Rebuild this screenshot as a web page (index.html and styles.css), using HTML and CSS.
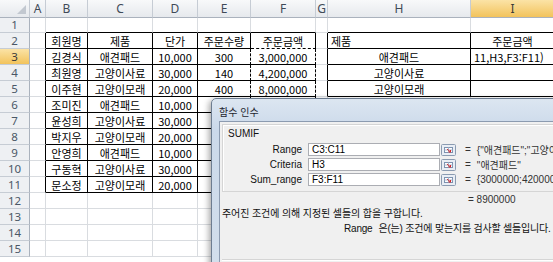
FILE: index.html
```html
<!DOCTYPE html>
<html lang="ko">
<head>
  <meta charset="UTF-8" />
  <title>SUMIF 함수 인수</title>
  <link rel="stylesheet" href="styles.css">
</head>
<body>

  <!-- Worksheet -->
  <table class="sheet">
    <colgroup>
      <col class="c-hdr"><col class="c-a"><col class="c-b"><col class="c-c"><col class="c-d">
      <col class="c-e"><col class="c-f"><col class="c-g"><col class="c-h"><col class="c-i">
    </colgroup>
    <thead>
      <tr>
        <th class="corner"></th><th>A</th><th>B</th><th>C</th><th>D</th>
        <th>E</th><th>F</th><th>G</th><th>H</th><th class="sel">I</th>
      </tr>
    </thead>
    <tbody>
      <tr class="r1">
        <th>1</th><td></td><td class="kb"></td><td class="kb"></td><td class="kb"></td>
        <td class="kb"></td><td class="kb"></td><td></td><td class="kb"></td><td class="kb"></td>
      </tr>
      <tr>
        <th>2</th><td class="kr"></td><td class="k">회원명</td><td class="k">제품</td><td class="k">단가</td>
        <td class="k">주문수량</td><td class="f2">주문금액</td><td class="kr"></td><td class="k left">제품</td><td class="k">주문금액</td>
      </tr>
      <tr>
        <th class="sel">3</th><td class="kr"></td><td class="k">김경식</td><td class="k">애견패드</td><td class="k">10,000</td>
        <td class="ed">300</td><td class="fm">3,000,000</td><td class="kr"></td><td class="k">애견패드</td><td class="k left">11,H3,F3:F11)</td>
      </tr>
      <tr>
        <th>4</th><td class="kr"></td><td class="k">최원영</td><td class="k">고양이사료</td><td class="k">30,000</td>
        <td class="ed">140</td><td class="fm">4,200,000</td><td class="kr"></td><td class="k">고양이사료</td><td class="k"></td>
      </tr>
      <tr>
        <th>5</th><td class="kr"></td><td class="k">이주현</td><td class="k">고양이모래</td><td class="k">20,000</td>
        <td class="ed">400</td><td class="fm">8,000,000</td><td class="kr"></td><td class="k">고양이모래</td><td class="k"></td>
      </tr>
      <tr>
        <th>6</th><td class="kr"></td><td class="k">조미진</td><td class="k">애견패드</td><td class="k">10,000</td>
        <td class="ed"></td><td class="fm"></td><td></td><td></td><td></td>
      </tr>
      <tr>
        <th>7</th><td class="kr"></td><td class="k">윤성희</td><td class="k">고양이사료</td><td class="k">30,000</td>
        <td class="ed"></td><td class="fm"></td><td></td><td></td><td></td>
      </tr>
      <tr>
        <th>8</th><td class="kr"></td><td class="k">박지우</td><td class="k">고양이모래</td><td class="k">20,000</td>
        <td class="ed"></td><td class="fm"></td><td></td><td></td><td></td>
      </tr>
      <tr>
        <th>9</th><td class="kr"></td><td class="k">안영희</td><td class="k">애견패드</td><td class="k">10,000</td>
        <td class="ed"></td><td class="fm"></td><td></td><td></td><td></td>
      </tr>
      <tr>
        <th>10</th><td class="kr"></td><td class="k">구동혁</td><td class="k">고양이사료</td><td class="k">30,000</td>
        <td class="ed"></td><td class="fm"></td><td></td><td></td><td></td>
      </tr>
      <tr>
        <th>11</th><td class="kr"></td><td class="k">문소정</td><td class="k">고양이모래</td><td class="k">20,000</td>
        <td class="ed"></td><td class="fe"></td><td></td><td></td><td></td>
      </tr>
      <tr><th>12</th><td></td><td></td><td></td><td></td><td></td><td></td><td></td><td></td><td></td></tr>
      <tr><th>13</th><td></td><td></td><td></td><td></td><td></td><td></td><td></td><td></td><td></td></tr>
      <tr><th>14</th><td></td><td></td><td></td><td></td><td></td><td></td><td></td><td></td><td></td></tr>
      <tr><th>15</th><td></td><td></td><td></td><td></td><td></td><td></td><td></td><td></td><td></td></tr>
    </tbody>
  </table>

  <!-- Function Arguments dialog -->
  <div class="dialog">
    <div class="dlg-title">함수 인수</div>
    <div class="dlg-body">
      <div class="group">
        <div class="fn-name">SUMIF</div>

        <div class="arg">
          <span class="arg-label">Range</span>
          <span class="arg-input">C3:C11</span>
          <svg class="ref-btn" width="15" height="12" viewBox="0 0 15 12">
            <rect x="0.5" y="0.5" width="14" height="11" rx="1" fill="#e9eef5" stroke="#8a9bb1"/>
            <rect x="3.5" y="3.5" width="8" height="5" fill="#fff" stroke="#7d93b0"/>
            <path d="M3.5 6h8M7.5 3.5v5" stroke="#a9b8cc"/>
            <path d="M6 5l3.5 3M9.5 8H7.5M9.5 8V6" stroke="#d6282d" fill="none"/>
          </svg>
          <span class="eq">=</span>
          <span class="arg-value">{"애견패드";"고양이</span>
        </div>

        <div class="arg">
          <span class="arg-label">Criteria</span>
          <span class="arg-input">H3</span>
          <svg class="ref-btn" width="15" height="12" viewBox="0 0 15 12">
            <rect x="0.5" y="0.5" width="14" height="11" rx="1" fill="#e9eef5" stroke="#8a9bb1"/>
            <rect x="3.5" y="3.5" width="8" height="5" fill="#fff" stroke="#7d93b0"/>
            <path d="M3.5 6h8M7.5 3.5v5" stroke="#a9b8cc"/>
            <path d="M6 5l3.5 3M9.5 8H7.5M9.5 8V6" stroke="#d6282d" fill="none"/>
          </svg>
          <span class="eq">=</span>
          <span class="arg-value">"애견패드"</span>
        </div>

        <div class="arg">
          <span class="arg-label">Sum_range</span>
          <span class="arg-input">F3:F11</span>
          <svg class="ref-btn" width="15" height="12" viewBox="0 0 15 12">
            <rect x="0.5" y="0.5" width="14" height="11" rx="1" fill="#e9eef5" stroke="#8a9bb1"/>
            <rect x="3.5" y="3.5" width="8" height="5" fill="#fff" stroke="#7d93b0"/>
            <path d="M3.5 6h8M7.5 3.5v5" stroke="#a9b8cc"/>
            <path d="M6 5l3.5 3M9.5 8H7.5M9.5 8V6" stroke="#d6282d" fill="none"/>
          </svg>
          <span class="eq">=</span>
          <span class="arg-value">{3000000;4200000;8</span>
        </div>
      </div>

      <div class="result"><span class="eq">=</span> 8900000</div>
      <p class="desc">주어진 조건에 의해 지정된 셀들의 합을 구합니다.</p>
      <p class="help"><span class="help-arg">Range</span>은(는) 조건에 맞는지를 검사할 셀들입니다.</p>
      <div class="divider"></div>
    </div>
  </div>

</body>
</html>
```

FILE: styles.css
```css
/* Basic Reset */
* {
  margin: 0;
  padding: 0;
  box-sizing: border-box;
}

body {
  width: 553px;
  height: 262px;
  overflow: hidden;
  position: relative;
  background: #fff;
  font-family: "Noto Sans CJK KR", "Noto Sans", sans-serif;
  color: #000;
}

/* Worksheet grid */
.sheet {
  border-collapse: separate;
  border-spacing: 0;
  table-layout: fixed;
  width: 555px;
  font-size: 11px;
}

.c-hdr { width: 30px; }
.c-a { width: 16px; }
.c-b { width: 42px; }
.c-c { width: 65px; }
.c-d { width: 45px; }
.c-e { width: 53px; }
.c-f { width: 65px; }
.c-g { width: 12px; }
.c-h { width: 143px; }
.c-i { width: 84px; }

.sheet th,
.sheet td {
  padding: 0;
  white-space: nowrap;
  overflow: hidden;
  text-align: center;
  line-height: 14px;
  font-weight: normal;
}

.sheet td {
  height: 16px;
  border-right: 1px solid #d9dce0;
  border-bottom: 1px solid #d9dce0;
}

.sheet tr.r1 td,
.sheet tr.r1 th {
  height: 14px;
}

/* Column & row headers */
.sheet thead th {
  height: 18px;
  font-family: "Noto Sans", sans-serif;
  font-size: 12px;
  color: #3f4a57;
  background: linear-gradient(#f8f9fa, #e6e9ed);
  border-right: 1px solid #c6ccd4;
  border-bottom: 1px solid #aab2bd;
}

.sheet tbody th {
  height: 16px;
  font-family: "Noto Sans", sans-serif;
  font-size: 11.5px;
  color: #4a5766;
  background: #eef0f3;
  border-right: 1px solid #aab2bd;
  border-bottom: 1px solid #c6ccd4;
}

.sheet th.sel {
  background: linear-gradient(#fbe3a6, #f2c35c);
  color: #3a3a3a;
}

.sheet thead th.corner {
  position: relative;
}

.sheet thead th.corner::after {
  content: "";
  position: absolute;
  right: 3px;
  bottom: 3px;
  border-left: 9px solid transparent;
  border-bottom: 9px solid #c2c8d0;
}

/* Table borders drawn on the cells */
.sheet td.k {
  border-right-color: #000;
  border-bottom-color: #000;
}

.sheet td.kb {
  border-bottom-color: #000;
}

.sheet td.kr {
  border-right-color: #000;
}

.sheet td.left {
  text-align: left;
  padding-left: 3px;
}

/* Copy marquee around F3:F11 */
.sheet td.f2 {
  border-right-color: #000;
  border-bottom: 1px dashed #000;
}

.sheet td.ed {
  border-right: 1px dashed #000;
  border-bottom-color: #000;
}

.sheet td.fm {
  border-right: 1px dashed #000;
  border-bottom-color: #000;
}

.sheet td.fe {
  border-right: 1px dashed #000;
  border-bottom: 1px dashed #000;
}

/* Function Arguments dialog */
.dialog {
  position: absolute;
  left: 211px;
  top: 98px;
  width: 360px;
  height: 180px;
  overflow: hidden;
  padding: 0 0 0 7px;
  background: linear-gradient(#dce6f1, #cbd9ea 30px, #d3dfec);
  border: 1px solid #6d7d91;
  border-radius: 5px 0 0 0;
  box-shadow: -2px 2px 6px rgba(0, 0, 0, 0.35);
  font-family: "Liberation Sans", "Noto Sans CJK KR", sans-serif;
  font-size: 10px;
}

.dlg-title {
  height: 22px;
  line-height: 25px;
  font-family: "Noto Sans CJK KR", sans-serif;
  font-size: 10px;
  color: #1e2630;
}

.dlg-body {
  height: 170px;
  background: #f0f0f0;
  border: 1px solid #8c9bb0;
  padding: 2px 0 0 2px;
}

.group {
  border-top: 1px solid #d5d5d5;
  border-left: 1px solid #d5d5d5;
  border-bottom: 1px solid #d5d5d5;
  box-shadow: inset 1px 1px 0 #fff;
  padding: 2px 0 4px 0;
}

.fn-name {
  height: 13px;
  line-height: 13px;
  padding-left: 5px;
  margin-bottom: 2px;
  color: #111;
}

.arg {
  display: flex;
  align-items: center;
  height: 15px;
  white-space: nowrap;
}

.arg > * {
  flex: none;
}

.arg-label {
  width: 79px;
  text-align: right;
  color: #111;
}

.arg-input {
  width: 132px;
  height: 13px;
  line-height: 11px;
  margin-left: 6px;
  padding-left: 3px;
  background: #fff;
  border: 1px solid #abadb3;
}

.ref-btn {
  margin-left: 1px;
}

.eq {
  margin-left: 9px;
  color: #333;
}

.arg-value {
  margin-left: 6px;
  color: #333;
}

.result {
  height: 13px;
  line-height: 13px;
  padding-left: 237px;
  margin-top: 1px;
  color: #333;
}

.desc {
  margin-top: 1px;
  line-height: 13px;
  letter-spacing: -0.1px;
  color: #111;
}

.help {
  margin-top: 2px;
  padding-left: 122px;
  line-height: 13px;
  letter-spacing: -0.2px;
  white-space: nowrap;
  color: #111;
}

.help-arg {
  margin-right: 6px;
}

.divider {
  margin-top: 24px;
  border-top: 1px solid #d5d5d5;
  border-bottom: 1px solid #fff;
}
```
